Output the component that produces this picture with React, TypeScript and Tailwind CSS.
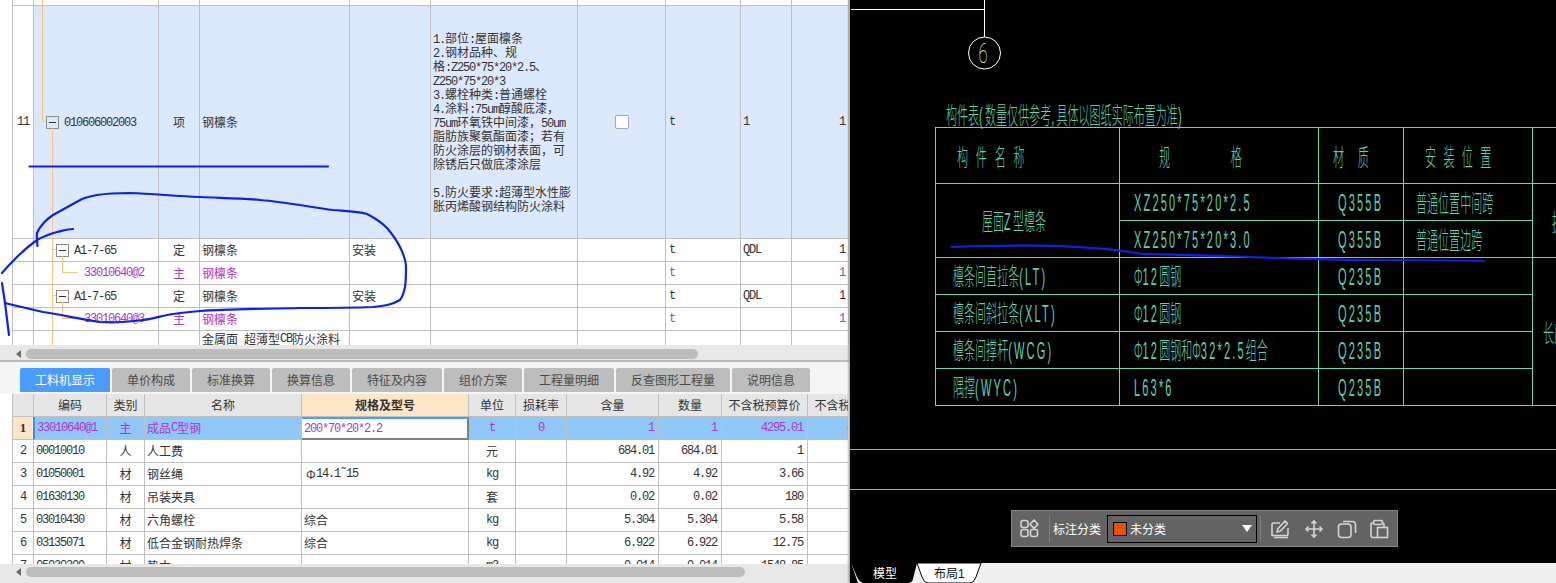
import React from "react";

const LINE = "border-[#c0c0c0]";

/* Text whose ASCII runs are half-width (6px per char) like the original bitmap font */
function Txt({ t }: { t: string }) {
  const runs = t.match(/[\x20-\x7e\u02dc]+|[^\x20-\x7e\u02dc]+/g) || [];
  return (
    <>
      {runs.map((r, i) =>
        /^[\x20-\x7e\u02dc]/.test(r) ? (
          <span key={i} className="whitespace-pre font-['Liberation_Mono'] tracking-[-1.2px]">{r}</span>
        ) : (
          <span key={i}>{r}</span>
        )
      )}
    </>
  );
}

function Minus() {
  return (
    <span className="flex h-[13px] w-[13px] shrink-0 items-center justify-center border border-[#8c8c8c]">
      <span className="h-px w-[7px] bg-[#333]" />
    </span>
  );
}

function Cell({ className = "", children }: { className?: string; children?: React.ReactNode }) {
  return (
    <div className={`flex min-w-0 items-center overflow-hidden whitespace-nowrap border-r border-b ${LINE} ${className}`}>
      {children}
    </div>
  );
}

const DESC = [
  "1.部位:屋面檩条",
  "2.钢材品种、规",
  "格:Z250*75*20*2.5、",
  "Z250*75*20*3",
  "3.螺栓种类:普通螺栓",
  "4.涂料:75um醇酸底漆，",
  "75um环氧铁中间漆，50um",
  "脂肪族聚氨酯面漆；若有",
  "防火涂层的钢材表面，可",
  "除锈后只做底漆涂层",
  "\u00a0",
  "5.防火要求:超薄型水性膨",
  "胀丙烯酸钢结构防火涂料",
];

function SubRows({ n }: { n: string }) {
  const P = "text-[#a838c8]";
  return (
    <>
      <Cell />
      <Cell className="pl-[22px]"><Minus /><span className="ml-[5px]"><Txt t="A1-7-65" /></span></Cell>
      <Cell className="justify-center">定</Cell>
      <Cell className="pl-[2px]">钢檩条</Cell>
      <Cell className="pl-[2px]">安装</Cell>
      <Cell />
      <Cell />
      <Cell className="pl-[3px]"><Txt t="t" /></Cell>
      <Cell className="pl-[2px]"><Txt t="QDL" /></Cell>
      <Cell className="justify-end pr-[3px]"><Txt t="1" /></Cell>

      <Cell />
      <Cell className={`pl-[50px] ${P}`}><Txt t={n} /></Cell>
      <Cell className={`justify-center ${P}`}>主</Cell>
      <Cell className={`pl-[2px] ${P}`}>钢檩条</Cell>
      <Cell />
      <Cell />
      <Cell />
      <Cell className={`pl-[3px] ${P}`}><Txt t="t" /></Cell>
      <Cell />
      <Cell className={`justify-end pr-[3px] ${P}`}><Txt t="1" /></Cell>
    </>
  );
}

function UpperGrid() {
  const B = "bg-[#dce9fd]";
  return (
    <div className="relative h-[345px] shrink-0 overflow-hidden pl-[12px] text-[12px] leading-[14px] text-[#333]">
      <div className={`grid grid-cols-[21px_125px_41px_150px_81px_147px_88px_75px_51px_57px] grid-rows-[6px_233px_23px_23px_23px_23px_40px] border-l ${LINE}`}>
        {Array.from({ length: 10 }).map((_, i) => <Cell key={i} />)}

        <Cell className="justify-center"><Txt t="11" /></Cell>
        <Cell className={`${B} pl-[12px]`}><Minus /><span className="ml-[5px]"><Txt t="010606002003" /></span></Cell>
        <Cell className={`${B} justify-center`}>项</Cell>
        <Cell className={`${B} pl-[2px]`}>钢檩条</Cell>
        <Cell className={B} />
        <Cell className={`${B} pl-[2px]`}>
          <div className="flex flex-col">
            {DESC.map((l, i) => <div key={i} className="h-[14px]"><Txt t={l} /></div>)}
          </div>
        </Cell>
        <Cell className={`${B} justify-center`}>
          <span className="h-[14px] w-[14px] rounded-[2px] border border-[#a8a8a8] bg-white" />
        </Cell>
        <Cell className={`${B} pl-[3px]`}><Txt t="t" /></Cell>
        <Cell className={`${B} pl-[2px]`}><Txt t="1" /></Cell>
        <Cell className={`${B} justify-end pr-[3px]`}><Txt t="1" /></Cell>

        <SubRows n="33010640@2" />
        <SubRows n="33010640@3" />

        <Cell />
        <Cell />
        <Cell />
        <Cell className="items-start pl-[2px] pt-[1px]"><Txt t="金属面 超薄型CB防火涂料" /></Cell>
        <Cell />
        <Cell />
        <Cell />
        <Cell />
        <Cell />
        <Cell />
      </div>
      {/* tree connectors */}
      <svg className="pointer-events-none absolute left-0 top-0" width="100" height="345" fill="none" stroke="#fdc47c" strokeWidth="1">
        <path d="M42.5 0V121.5H46M52.5 128V345M52.5 249.5H56M52.5 295.5H56M62.5 256V272.5H78M62.5 302V318.5H78" />
      </svg>
    </div>
  );
}

function Scroll({ thumb, last }: { thumb: string; last?: boolean }) {
  return (
    <div className={`flex shrink-0 items-start bg-[#e8e8e8] pl-[12px] ${last ? "h-[19px] pt-[3px]" : "h-[17px] border-b-2 border-[#bcbcbc] pt-[4px]"}`}>
      <div className="flex h-[10px] w-[14px] items-center pl-[4px]">
        <span className="h-0 w-0 border-y-[4px] border-r-[5px] border-y-transparent border-r-[#6a6a6a]" />
      </div>
      <div className={`h-[10px] rounded-[5px] bg-[#bdbdbd] ${thumb}`} />
    </div>
  );
}

const TABS: [string, string][] = [
  ["单价构成", "w-[78px]"],
  ["标准换算", "w-[78px]"],
  ["换算信息", "w-[78px]"],
  ["特征及内容", "w-[90px]"],
  ["组价方案", "w-[78px]"],
  ["工程量明细", "w-[90px]"],
  ["反查图形工程量", "w-[114px]"],
  ["说明信息", "w-[78px]"],
];

function Tabs() {
  return (
    <div className="flex h-[32px] shrink-0 items-start gap-[2px] bg-[#f5f5f5] pl-[20px] pt-[6px] text-[12px]">
      <div className="flex h-[24px] w-[90px] items-center justify-center rounded-t-[2px] bg-[#4a9cff] text-white">工料机显示</div>
      {TABS.map(([t, w]) => (
        <div key={t} className={`flex h-[24px] items-center justify-center rounded-t-[2px] bg-[#bdbdbd] text-[#4a4a4a] ${w}`}>{t}</div>
      ))}
    </div>
  );
}

const ROWS: string[][] = [
  ["2", "00010010", "人", "人工费", "", "元", "", "684.01", "684.01", "1", ""],
  ["3", "01050001", "材", "钢丝绳", "14.1\u02dc15", "kg", "", "4.92", "4.92", "3.66", ""],
  ["4", "01630130", "材", "吊装夹具", "", "套", "", "0.02", "0.02", "180", ""],
  ["5", "03010430", "材", "六角螺栓", "综合", "kg", "", "5.304", "5.304", "5.58", ""],
  ["6", "03135071", "材", "低合金钢耐热焊条", "综合", "kg", "", "6.922", "6.922", "12.75", ""],
  ["7", "05030300", "材", "垫木", "", "m3", "", "0.014", "0.014", "1548.85", "1548.85"],
];

function LowerGrid() {
  const H = "justify-center bg-[#e6e6e6]";
  const P = "text-[#a838c8]";
  const S = "bg-[#90c7f6]";
  return (
    <div className="h-[170px] w-[848px] shrink-0 overflow-hidden bg-white pl-[12px] text-[12px] leading-[14px] text-[#333]">
      <div className={`grid w-max grid-cols-[21px_73px_38px_157px_167px_47px_51px_92px_63px_86px_86px] auto-rows-[23px] border-l ${LINE}`}>
        <Cell className={H} />
        <Cell className={H}>编码</Cell>
        <Cell className={H}>类别</Cell>
        <Cell className={H}>名称</Cell>
        <Cell className="justify-center bg-[#fde6c8] font-bold">规格及型号</Cell>
        <Cell className={H}>单位</Cell>
        <Cell className={H}>损耗率</Cell>
        <Cell className={H}>含量</Cell>
        <Cell className={H}>数量</Cell>
        <Cell className={H}>不含税预算价</Cell>
        <Cell className={H}>不含税市场价</Cell>

        <Cell className="justify-center bg-[#fde6c8] font-['Liberation_Serif'] text-[13px] font-bold">1</Cell>
        <Cell className={`${S} ${P} border-l-2 border-l-[#3b8df5] -ml-[1px] pl-[2px]`}><Txt t="33010640@1" /></Cell>
        <Cell className={`${S} ${P} justify-center`}>主</Cell>
        <Cell className={`${S} ${P} pl-[2px]`}><Txt t="成品C型钢" /></Cell>
        <Cell className={`${P} border-t-2 border-t-[#4a9eff] border-r-2 border-b-2 border-r-[#808080] border-b-[#808080] pl-[2px]`}><Txt t="200*70*20*2.2" /></Cell>
        <Cell className={`${S} ${P} justify-center`}><Txt t="t" /></Cell>
        <Cell className={`${S} ${P} justify-center`}><Txt t="0" /></Cell>
        <Cell className={`${S} ${P} justify-end pr-[4px]`}><Txt t="1" /></Cell>
        <Cell className={`${S} ${P} justify-end pr-[4px]`}><Txt t="1" /></Cell>
        <Cell className={`${S} ${P} justify-end pr-[4px]`}><Txt t="4295.01" /></Cell>
        <Cell className={`${S} ${P} justify-end pr-[4px]`}><Txt t="4295.01" /></Cell>

        {ROWS.map((r) => (
          <React.Fragment key={r[0]}>
            <Cell className="justify-center"><Txt t={r[0]} /></Cell>
            <Cell className="pl-[2px]"><Txt t={r[1]} /></Cell>
            <Cell className="justify-center">{r[2]}</Cell>
            <Cell className="pl-[2px]">{r[3]}</Cell>
            <Cell className="pl-[2px]">
              {r[0] === "3" && <span className="ml-[2px] mr-[2px] inline-block w-[8px]">Φ</span>}
              <Txt t={r[4]} />
            </Cell>
            <Cell className="justify-center"><Txt t={r[5]} /></Cell>
            <Cell />
            <Cell className="justify-end pr-[4px]"><Txt t={r[7]} /></Cell>
            <Cell className="justify-end pr-[4px]"><Txt t={r[8]} /></Cell>
            <Cell className="justify-end pr-[4px]"><Txt t={r[9]} /></Cell>
            <Cell className="justify-end pr-[4px]"><Txt t={r[10]} /></Cell>
          </React.Fragment>
        ))}
      </div>
    </div>
  );
}

/* ---------- CAD side ---------- */

function Cad({ t, className = "" }: { t: string; className?: string }) {
  const runs = t.match(/[\x21-\x7e]+|[^\x21-\x7e]+/g) || [];
  return (
    <span className={`inline-block origin-left scale-x-[0.46] whitespace-pre text-[24px] font-light leading-none text-[#5fcfae] ${className}`}>
      {runs.map((r, i) =>
        /^[\x21-\x7e]/.test(r) ? (
          <span key={i} className="font-['Liberation_Sans'] text-[24px] tracking-[4.7px]">{r}</span>
        ) : (
          <span key={i}>{r}</span>
        )
      )}
    </span>
  );
}

function CC({ className = "", children }: { className?: string; children?: React.ReactNode }) {
  return <div className={`flex items-center overflow-hidden border-r border-b border-[#66d6b4] ${className}`}>{children}</div>;
}

function CadTable() {
  const rows: [string, string, string][] = [
    ["檩条间直拉条(LT)", "Φ12圆钢", "Q235B"],
    ["檩条间斜拉条(XLT)", "Φ12圆钢", "Q235B"],
    ["檩条间撑杆(WCG)", "Φ12圆钢和Φ32*2.5组合", "Q235B"],
    ["隅撑(WYC)", "L63*6", "Q235B"],
  ];
  return (
    <div className="ml-[85px] grid grid-cols-[184px_199px_85px_129px_1fr] grid-rows-[56px_repeat(6,37px)] border-t border-l border-[#66d6b4]">
      <CC className="pl-[21px]"><Cad t="构件名称" className="tracking-[17px]" /></CC>
      <CC className="pl-[39px]"><Cad t="规格" className="tracking-[132px]" /></CC>
      <CC className="pl-[14px]"><Cad t="材质" className="tracking-[30px]" /></CC>
      <CC className="pl-[21px]"><Cad t="安装位置" className="tracking-[16px]" /></CC>
      <CC className="border-r-0" />

      <CC className="row-span-2 pl-[46px]"><Cad t="屋面Z型檩条" /></CC>
      <CC className="pl-[14px]"><Cad t="XZ250*75*20*2.5" /></CC>
      <CC className="pl-[19px]"><Cad t="Q355B" /></CC>
      <CC className="pl-[12px]"><Cad t="普通位置中间跨" /></CC>
      <CC className="row-span-2 border-r-0 pl-[19px]"><Cad t="据实" /></CC>
      <CC className="pl-[14px]"><Cad t="XZ250*75*20*3.0" /></CC>
      <CC className="pl-[19px]"><Cad t="Q355B" /></CC>
      <CC className="pl-[12px]"><Cad t="普通位置边跨" /></CC>

      {rows.map(([a, b, c], i) => (
        <React.Fragment key={a}>
          <CC className="pl-[17px]"><Cad t={a} /></CC>
          <CC className="pl-[14px]"><Cad t={b} /></CC>
          <CC className="pl-[19px]"><Cad t={c} /></CC>
          <CC />
          {i === 0 && <CC className="row-span-4 border-r-0 pl-[10px]"><Cad t="长度" /></CC>}
        </React.Fragment>
      ))}
    </div>
  );
}

function Toolbar() {
  const sep = <span className="block h-[26px] w-px bg-[#7e7e7e]" />;
  const ic = { fill: "none", stroke: "#d4d4d4", strokeWidth: 1.6 };
  return (
    <div className="absolute left-[161px] top-[510px] flex h-[37px] w-[387px] items-center border border-[#858585] bg-[#636363] text-[12px] text-white">
      <svg className="ml-[8px]" width="19" height="19" viewBox="0 0 19 19" {...ic}>
        <rect x="1" y="1.5" width="7" height="7" rx="2" />
        <path d="M14 1l4 4.2-4 4.2-4-4.2z" strokeLinejoin="round" />
        <rect x="1" y="10.5" width="7" height="7" rx="2" />
        <rect x="10.5" y="10.5" width="7" height="7" rx="2" />
      </svg>
      <span className="ml-[10px]">{sep}</span>
      <span className="ml-[3px]">标注分类</span>
      <div className="ml-[6px] flex h-[28px] w-[150px] items-center border border-black pl-[5px]">
        <span className="h-[14px] w-[14px] border border-black bg-[#e65100]" />
        <span className="ml-[3px]">未分类</span>
        <span className="ml-auto mr-[4px] h-0 w-0 border-x-[5px] border-t-[7px] border-x-transparent border-t-white" />
      </div>
      <span className="ml-[3px]">{sep}</span>
      <svg className="ml-[9px]" width="20" height="20" viewBox="0 0 20 20" {...ic}>
        <path d="M10 4H3.5A1.5 1.5 0 0 0 2 5.5V16.5H16.5A1.5 1.5 0 0 0 18 15V9" />
        <path d="M4 18.5H18" />
        <path d="M7 13l1-3.5 7-7.5 2.5 2.5-7 7.5z" strokeLinejoin="round" />
      </svg>
      <svg className="ml-[14px]" width="20" height="20" viewBox="0 0 20 20" {...ic}>
        <path d="M10 2V18M2 10H18M7.5 4.5L10 2l2.5 2.5M7.5 15.5L10 18l2.5-2.5M4.5 7.5L2 10l2.5 2.5M15.5 7.5L18 10l-2.5 2.5" />
      </svg>
      <svg className="ml-[13px]" width="20" height="20" viewBox="0 0 20 20" {...ic}>
        <rect x="1.5" y="5" width="12.5" height="13.5" rx="3" />
        <path d="M6 2.5H15.5A3 3 0 0 1 18.5 5.5V14" />
      </svg>
      <svg className="ml-[12px]" width="20" height="20" viewBox="0 0 20 20" {...ic}>
        <path d="M4.5 4H3.5A1.5 1.5 0 0 0 2 5.5V17A1.5 1.5 0 0 0 3.5 18.5H8" />
        <rect x="4.5" y="1.5" width="9" height="4" rx="1.5" />
        <path d="M13.5 4A1.5 1.5 0 0 1 15 5.5V8" />
        <rect x="8.5" y="8.5" width="10" height="10" />
      </svg>
    </div>
  );
}

function BottomTabs() {
  return (
    <div className="relative flex h-[20px] shrink-0 items-center bg-[#f0f0f0] text-[12px]">
      <svg className="absolute left-0 top-0" width="140" height="20" viewBox="0 0 140 20">
        <path d="M0 0V20H8L1 0zM1 0L7 14Q10 20 14 20H58Q62 20 63 16L67 0z" fill="#000" />
        <path d="M67 0L72 14Q74 20 78 20H120Q124 20 126 14L131 0z" fill="#fff" stroke="#000" />
      </svg>
      <span className="relative ml-[23px] text-white">模型</span>
      <span className="relative ml-[37px] text-[#111]">布局<span className="font-['Liberation_Sans']">1</span></span>
    </div>
  );
}

function Right() {
  return (
    <div className="relative flex flex-1 flex-col overflow-hidden bg-black">
      <div className="min-h-0 flex-1">
        <svg className="block" width="200" height="72" fill="none" stroke="#fff" strokeWidth="1">
          <path d="M1 9.5H135M134.5 0V37" />
          <circle cx="134.5" cy="53" r="16" />
          <text x="0" y="63" textAnchor="middle" fill="#fff" stroke="none" fontSize="27" fontWeight="100" fontFamily="Roboto" transform="translate(133 0) scale(0.62 1)">6</text>
        </svg>
        <div className="mt-[31px] flex h-[24px] items-center pl-[96px]">
          <Cad t="构件表(数量仅供参考,具体以图纸实际布置为准)" />
        </div>
        <CadTable />
        <div className="mt-[43px] h-px bg-[#2fdede]" />
        <div className="mt-[39px] h-px bg-[#2fdede]" />
      </div>
      <Toolbar />
      <BottomTabs />
    </div>
  );
}

function Ink() {
  const s = { fill: "none", stroke: "#0d22e2", strokeWidth: 2.2, strokeLinecap: "round" as const, strokeLinejoin: "round" as const };
  return (
    <svg className="pointer-events-none absolute left-0 top-0" width="1556" height="583" {...s}>
      <path d="M29.5 166.5H328" />
      <path d="M37.5 246C37 240 36.5 236 37 233C41 224 47 219 53 215L82 199C87 197 92 196 97 195C110 193 120 193 130 193C155 194 175 196 200 197C220 198 240 198 260 200C285 202 310 207 333 210C345 211 357 211 367 214C375 218 381 222 387 228C393 235 397 241 400 247C404 255 406 262 406 267C406 274 406 281 405 287C404 292 403 296 400 300C392 305 383 306 373 307C350 308 325 308 300 308C265 309 230 309 200 311C188 312 177 313 167 315C158 317 151 319 143 320C128 322 113 323 100 322C80 319 62 315 43 312C30 309 17 306 5 303" />
      <path d="M2 273C7 267 12 262 17 257C23 251 30 245 37 240C44 236 50 234 57 232C62 231 68 229 73 229" />
      <path d="M2 283L5 303L9 335" />
      <path d="M952 247C985 246 1025 245 1058 246C1080 247 1103 248 1123 251C1130 252 1136 253 1143 254C1185 255 1230 256 1273 258C1305 259 1335 260 1366 260C1405 260 1445 260 1484 261" />
    </svg>
  );
}

export default function App() {
  return (
    <div className="relative flex h-[583px] w-[1556px] overflow-hidden bg-black font-['Noto_Sans_CJK_SC',sans-serif]">
      <div className="relative flex w-[850px] shrink-0 flex-col bg-white">
        <UpperGrid />
        <Scroll thumb="w-[672px]" />
        <Tabs />
        <LowerGrid />
        <Scroll thumb="w-[719px]" last />
        <div className="absolute right-0 top-0 h-full w-[3px] bg-gradient-to-r from-transparent to-[#9a9a9a]" />
      </div>
      <Right />
      <Ink />
    </div>
  );
}
